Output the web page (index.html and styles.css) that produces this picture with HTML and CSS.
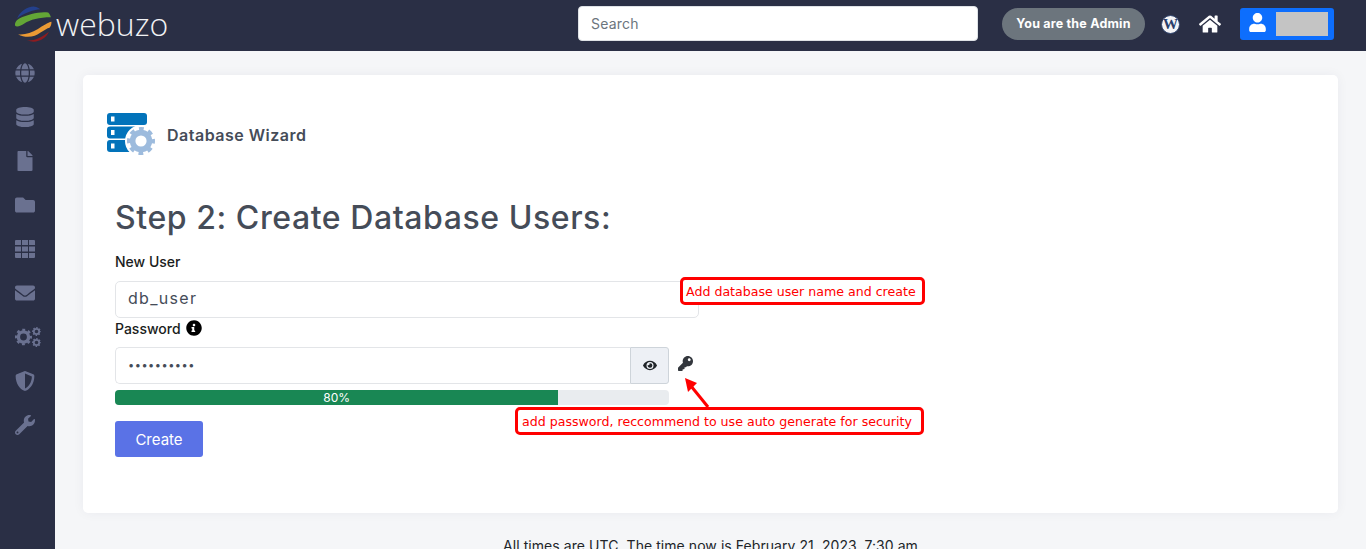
FILE: index.html
```html
<!DOCTYPE html>
<html lang="en">
<head>
<meta charset="utf-8">
<title>Database Wizard</title>
<link rel="stylesheet" href="styles.css">
</head>
<body>
<svg class="defs" aria-hidden="true">
  <symbol id="gear" viewBox="0 0 40 40">
    <circle cx="20" cy="20" r="17" fill="none" stroke="currentColor" stroke-width="6" stroke-dasharray="6.700 6.650" stroke-dashoffset="3.350"/>
    <circle cx="20" cy="20" r="12" fill="none" stroke="currentColor" stroke-width="8"/>
  </symbol>
</svg>
<header class="topbar">
  <a class="brand">
    <svg class="brand-mark" viewBox="40 15 120 115">
      <path d="M52 56C60 35 85 18 105 20c7 1 13 4 17 8-22 2-52 12-70 28z" fill="#24408c"/>
      <path d="M46 78C44 68 50 60 60 55c25-11 60-21 86-17 4 4 7 9 8 14-34 0-64 8-79 18-10 6-23 14-29 8z" fill="#63a636"/>
      <path d="M55 104c20 2 40-4 60-16 15-10 30-20 41-22 0 8-2 14-6 18-15 4-25 16-45 24-15 5-35 4-50-4z" fill="#eb9a34"/>
      <path d="M82 122c18 2 43-6 66-26-6 16-26 30-46 30-7 0-14-1-20-4z" fill="#8e1c20"/>
    </svg>
    <span class="brand-name">webuzo</span>
  </a>
  <input class="search" type="text" placeholder="Search">
  <div class="top-actions">
    <span class="admin-pill">You are the Admin</span>
    <span class="wp-badge"><span class="wp-letter">W</span></span>
    <svg class="home-icon" viewBox="0 0 576 512"><path fill="currentColor" d="M280.37 148.26L96 300.11V464a16 16 0 0 0 16 16l112.06-.29a16 16 0 0 0 15.92-16V368a16 16 0 0 1 16-16h64a16 16 0 0 1 16 16v95.64a16 16 0 0 0 16 16.05L464 480a16 16 0 0 0 16-16V300L295.67 148.26a12.19 12.19 0 0 0-15.3 0zM571.6 251.47L488 182.56V44.05a12 12 0 0 0-12-12h-56a12 12 0 0 0-12 12v72.61L318.47 43a48 48 0 0 0-61 0L4.34 251.47a12 12 0 0 0-1.6 16.9l25.5 31A12 12 0 0 0 45.15 301l235.22-193.74a12.19 12.19 0 0 1 15.3 0L530.9 301a12 12 0 0 0 16.9-1.6l25.5-31a12 12 0 0 0-1.7-16.93z"/></svg>
    <div class="user-btn">
      <svg class="user-icon" viewBox="0 0 448 512"><path fill="currentColor" d="M224 256c70.7 0 128-57.3 128-128S294.7 0 224 0 96 57.3 96 128s57.3 128 128 128zm89.6 32h-16.7c-22.2 10.2-46.9 16-72.9 16s-50.6-5.8-72.9-16h-16.7C60.2 288 0 348.2 0 422.4V464c0 26.5 21.5 48 48 48h352c26.5 0 48-21.5 48-48v-41.6c0-74.2-60.2-134.4-134.4-134.4z"/></svg>
      <span class="user-mask"></span>
    </div>
  </div>
</header>
<div class="layout">
  <nav class="sidebar">
    <svg class="side-icon" viewBox="0 0 496 512"><path fill="currentColor" d="M336.5 160C322 70.7 287.8 8 248 8s-74 62.7-88.5 152h177zM152 256c0 22.2 1.2 43.5 3.3 64h185.3c2.1-20.5 3.3-41.8 3.3-64s-1.2-43.5-3.3-64H155.3c-2.1 20.5-3.3 41.8-3.3 64zm324.7-96c-28.6-67.9-86.5-120.4-158-141.6 24.4 33.8 41.2 84.7 50 141.6h108zM177.2 18.4C105.8 39.6 47.8 92.1 19.3 160h108c8.7-56.9 25.5-107.8 49.9-141.6zM487.4 192H372.7c2.1 21 3.3 42.5 3.3 64s-1.2 43-3.3 64h114.6c5.500-20.5 8.6-41.8 8.6-64s-3.1-43.5-8.5-64zM120 256c0-21.5 1.2-43 3.3-64H8.6C3.2 212.5 0 233.8 0 256s3.2 43.5 8.6 64h114.6c-2-21-3.2-42.5-3.2-64zm39.5 96c14.5 89.3 48.7 152 88.5 152s74-62.7 88.5-152h-177zm159.3 141.6c71.4-21.2 129.4-73.7 158-141.6h-108c-8.8 56.9-25.6 107.8-50 141.6zM19.3 352c28.6 67.9 86.5 120.4 158 141.6-24.4-33.8-41.2-84.7-50-141.6h-108z"/></svg>
    <svg class="side-icon" viewBox="0 0 448 512"><path fill="currentColor" d="M448 73.143v45.714C448 159.143 347.667 192 224 192S0 159.143 0 118.857V73.143C0 32.857 100.333 0 224 0s224 32.857 224 73.143zM448 176v102.857C448 319.143 347.667 352 224 352S0 319.143 0 278.857V176c48.125 33.143 136.208 48.572 224 48.572S399.874 209.143 448 176zm0 160v102.857C448 479.143 347.667 512 224 512S0 479.143 0 438.857V336c48.125 33.143 136.208 48.572 224 48.572S399.874 369.143 448 336z"/></svg>
    <svg class="side-icon" viewBox="0 0 384 512"><path fill="currentColor" d="M224 136V0H24C10.700 0 0 10.700 0 24v464c0 13.300 10.700 24 24 24h336c13.300 0 24-10.700 24-24V160H248c-13.200 0-24-10.800-24-24zm160-14.100v6.100H256V0h6.100c6.400 0 12.500 2.500 17 7l97.900 98c4.500 4.500 7 10.600 7 16.900z"/></svg>
    <svg class="side-icon" viewBox="0 0 512 512"><path fill="currentColor" d="M464 128H272l-64-64H48C21.490 64 0 85.490 0 112v288c0 26.510 21.490 48 48 48h416c26.510 0 48-21.490 48-48V176c0-26.510-21.490-48-48-48z"/></svg>
    <svg class="side-icon" viewBox="0 0 20 18"><path fill="currentColor" d="M0 1a1 1 0 0 1 1-1h5v5H0zM7 0h6v5H7zM14 0h5a1 1 0 0 1 1 1v4h-6zM0 6.500h6v5H0zM7 6.500h6v5H7zM14 6.500h6v5h-6zM0 13h6v5H1a1 1 0 0 1-1-1zM7 13h6v5H7zM14 13h6v4a1 1 0 0 1-1 1h-5z"/></svg>
    <svg class="side-icon" viewBox="0 0 512 512"><path fill="currentColor" d="M502.3 190.800c3.900-3.100 9.700-.2 9.700 4.700V400c0 26.500-21.500 48-48 48H48c-26.500 0-48-21.500-48-48V195.600c0-5 5.700-7.800 9.700-4.700 22.400 17.400 52.100 39.500 154.100 113.600 21.100 15.400 56.700 47.800 92.200 47.600 35.700.3 72-32.800 92.300-47.600 102-74.100 131.600-96.300 154-113.700zM256 320c23.200.4 56.600-29.200 73.400-41.400 132.700-96.300 142.800-104.700 173.400-128.700 5.800-4.500 9.200-11.500 9.200-18.900v-19c0-26.500-21.500-48-48-48H48C21.500 64 0 85.500 0 112v19c0 7.400 3.400 14.300 9.200 18.900 30.600 23.900 40.700 32.400 173.400 128.700 16.800 12.200 50.200 41.800 73.400 41.400z"/></svg>
    <svg class="side-icon side-cogs" viewBox="0 0 26 20">
      <use href="#gear" x="0" y="1.500" width="17" height="17"/>
      <use href="#gear" x="17" y="0" width="9" height="9"/>
      <use href="#gear" x="17" y="11" width="9" height="9"/>
    </svg>
    <svg class="side-icon" viewBox="0 0 512 512"><path fill="currentColor" d="M466.500 83.700l-192-80a48.150 48.150 0 0 0-36.900 0l-192 80C27.700 91.100 16 108.600 16 128c0 198.500 114.500 335.700 221.500 380.300 11.800 4.900 25.100 4.900 36.900 0C360.100 472.600 496 349.300 496 128c0-19.400-11.700-36.900-29.500-44.300zM256.100 446.300l-.1-381 175.900 73.300c-3.300 151.400-82.100 261.100-175.800 307.700z"/></svg>
    <svg class="side-icon" viewBox="0 0 512 512"><path fill="currentColor" d="M507.730 109.100c-2.240-9.030-13.540-12.090-20.120-5.510l-74.360 74.360-67.880-11.310-11.310-67.880 74.360-74.360c6.620-6.620 3.430-17.900-5.660-20.160-47.380-11.740-99.550.91-136.580 37.930-39.640 39.640-50.550 97.100-34.050 147.200L18.740 402.760c-24.990 24.990-24.990 65.510 0 90.500 24.990 24.990 65.510 24.990 90.500 0l213.210-213.210c50.120 16.710 107.470 5.680 147.370-34.220 37.070-37.070 49.700-89.320 37.910-136.730zM64 472c-13.250 0-24-10.750-24-24 0-13.260 10.750-24 24-24s24 10.740 24 24c0 13.250-10.750 24-24 24z"/></svg>
  </nav>
  <main class="content">
    <section class="card">
      <div class="wizard-head">
        <svg class="wizard-icon" viewBox="0 0 48 42">
          <rect x="0" y="0" width="40" height="12" rx="3" fill="#0273ba"/>
          <rect x="0" y="13.500" width="40" height="12" rx="3" fill="#0273ba"/>
          <rect x="0" y="27" width="40" height="12" rx="3" fill="#0273ba"/>
          <rect x="4" y="3.500" width="3.500" height="5" fill="#fff"/>
          <rect x="4" y="17" width="3.500" height="5" fill="#fff"/>
          <rect x="4" y="30.500" width="3.500" height="5" fill="#fff"/>
          <circle cx="34" cy="28" r="16" fill="#fff"/>
          <use class="wizard-gear" href="#gear" x="20" y="14" width="28" height="28"/>
        </svg>
        <h2 class="wizard-title">Database Wizard</h2>
      </div>
      <div class="form">
        <h1 class="step-title">Step 2: Create Database Users:</h1>
        <label class="field-label first">New User</label>
        <input class="field user-field" type="text" value="db_user">
        <label class="field-label second">Password
          <svg class="info-icon" viewBox="0 0 512 512"><path fill="currentColor" d="M256 8C119.043 8 8 119.083 8 256c0 136.997 111.043 248 248 248s248-111.003 248-248C504 119.083 392.957 8 256 8zm0 110c23.196 0 42 18.804 42 42s-18.804 42-42 42-42-18.804-42-42 18.804-42 42-42zm56 254c0 6.627-5.373 12-12 12h-112c-6.627 0-12-5.373-12-12v-24c0-6.627 5.373-12 12-12h12v-64h-12c-6.627 0-12-5.373-12-12v-24c0-6.627 5.373-12 12-12h64c6.627 0 12 5.373 12 12v100h12c6.627 0 12 5.373 12 12v24z"/></svg>
        </label>
        <div class="password-row">
          <div class="input-group">
            <input class="field pass-field" type="password" value="abcdefghij">
            <span class="eye-addon"><svg class="eye-icon" viewBox="0 0 576 512"><path fill="currentColor" d="M572.520 241.400C518.290 135.590 410.930 64 288 64S57.680 135.640 3.480 241.410a32.350 32.350 0 0 0 0 29.190C57.710 376.410 165.070 448 288 448s230.320-71.640 284.520-177.410a32.350 32.350 0 0 0 0-29.190zM288 400a144 144 0 1 1 144-144 143.930 143.930 0 0 1-144 144zm0-240a95.310 95.310 0 0 0-25.310 3.790 47.850 47.850 0 0 1-66.900 66.900A95.780 95.780 0 1 0 288 160z"/></svg></span>
          </div>
          <svg class="key-icon" viewBox="0 0 512 512"><path fill="currentColor" d="M512 176.001C512 273.203 433.202 352 336 352c-11.220 0-22.190-1.062-32.827-3.069l-24.012 27.014A23.999 23.999 0 0 1 261.223 384H224v40c0 13.255-10.745 24-24 24h-40v40c0 13.255-10.745 24-24 24H24c-13.255 0-24-10.745-24-24v-78.059c0-6.365 2.529-12.470 7.029-16.971l161.802-161.802C163.108 213.814 160 195.271 160 176 160 78.798 238.797.001 335.999 0 433.488-.001 512 78.511 512 176.001zM336 128c0 26.510 21.490 48 48 48s48-21.490 48-48-21.490-48-48-48-48 21.490-48 48z"/></svg>
        </div>
        <div class="progress"><div class="progress-fill" style="width:80%">80%</div></div>
        <button class="create-btn" type="button">Create</button>
      </div>
      <div class="note note-user">Add database user name and create</div>
      <div class="note note-pass">add password, reccommend to use auto generate for security</div>
      <svg class="note-arrow" viewBox="0 0 30 30"><path d="M24 29L7 8" stroke="#f00" stroke-width="3" fill="none"/><path d="M1 0l12 5L4 14z" fill="#f00"/></svg>
    </section>
    <footer class="foot">All times are UTC. The time now is February 21, 2023, 7:30 am</footer>
  </main>
</div>
</body>
</html>
```
FILE: styles.css
```css
* { box-sizing: border-box; }
html, body { margin: 0; height: 549px; overflow: hidden; }
body { font-family: Inter, "Liberation Sans", sans-serif; background: #f5f6f8; color: #212529; }
.defs { display: none; }

.topbar { display: flex; align-items: center; height: 51px; padding-bottom: 3px; background: #2a2f45; }
.brand { display: flex; align-items: center; gap: 3px; width: 578px; padding-left: 13px; }
.brand-mark { width: 40px; height: 38px; flex: none; }
.brand-name { font-family: "Open Sans", sans-serif; font-weight: 300; font-size: 32px; color: #f1f2f4; line-height: 38px; }
.search { width: 400px; height: 35px; margin-top: -1px; padding: 0 12px; border: 1px solid #dee2e6; border-radius: 4px; background: #fff; font: 400 14px Inter, sans-serif; letter-spacing: .2px; }
.search::placeholder { color: #6c757d; opacity: 1; }
.top-actions { display: flex; align-items: center; margin-left: 24px; }
.admin-pill { width: 143px; height: 32px; border-radius: 16px; background: #6c757d; color: #fff; font-size: 12.500px; font-weight: 700; line-height: 32px; text-align: center; letter-spacing: .2px; }
.wp-badge { display: flex; align-items: center; justify-content: center; width: 19px; height: 19px; margin-left: 16px; border-radius: 50%; background: #f4f4f6; border: 1.500px solid #32466f; overflow: hidden; }
.wp-letter { font-family: "Liberation Serif", serif; font-weight: 700; font-size: 15px; line-height: 1; color: #2a3f6c; }
.home-icon { width: 22px; height: 20px; margin-left: 19px; color: #fff; }
.user-btn { display: flex; align-items: center; width: 94px; height: 32px; margin-left: 19px; padding-left: 9px; gap: 10px; border-radius: 3px; background: #0d6efd; }
.user-icon { width: 17px; height: 19px; margin-top: -3px; color: #fff; }
.user-mask { width: 52px; height: 24px; background: #c4c4c4; }

.layout { display: flex; height: 498px; }
.sidebar { display: flex; flex-direction: column; align-items: center; gap: 24px; flex: none; width: 55px; padding: 12px 5px 0 0; background: #2a2f45; color: #6a7190; }
.side-icon { width: 20px; height: 20px; flex: none; }
.side-cogs { width: 26px; margin-left: 5px; }
.content { flex: 1; padding: 24px 28px 0; }

.card { position: relative; height: 438px; padding: 38px 24px 0; border-radius: 5px; background: #fff; box-shadow: 0 0 12px rgba(30, 40, 70, .05); }
.wizard-head { display: flex; align-items: center; gap: 12px; height: 42px; }
.wizard-icon { width: 48px; height: 42px; flex: none; }
.wizard-gear { color: #9dbbdd; }
.wizard-title { margin: 2px 0 0; font-size: 16px; font-weight: 600; color: #454c58; letter-spacing: .5px; }
.form { padding: 0 8px; }
.step-title { margin: 39px 0 0; font-size: 32px; line-height: 48px; font-weight: 500; color: #454c58; letter-spacing: .57px; }
.field-label { display: flex; align-items: center; gap: 5px; height: 21px; font-size: 14px; font-weight: 500; color: #1a1d20; }
.first { margin-top: 9px; }
.second { height: 20px; }
.field { display: block; height: 37px; border: 1px solid #e3e5e8; border-radius: 5px; background: #fff; color: #454c58; padding: 0 12px; outline: none; }
.user-field { width: 584px; margin-top: 9px; padding-bottom: 3px; font: 400 16px Inter, sans-serif; letter-spacing: 1.300px; }
.info-icon { width: 16px; height: 16px; color: #000; }
.password-row { display: flex; align-items: center; margin-top: 9px; }
.input-group { display: flex; width: 554px; }
.pass-field { flex: 1; min-width: 0; padding-bottom: 2px; border-radius: 5px 0 0 5px; border-right: 0; font: 400 11px Inter, sans-serif; letter-spacing: .5px; }
.eye-addon { display: flex; align-items: center; justify-content: center; width: 39px; height: 37px; border: 1px solid #ced4da; border-radius: 0 3px 3px 0; background: #edf0f5; }
.eye-icon { width: 14px; height: 13px; color: #212529; }
.key-icon { width: 15px; height: 15px; margin: -4px 0 0 9px; color: #33373d; }
.progress { width: 554px; height: 15px; margin-top: 6px; border-radius: 4px; background: #e9ecef; overflow: hidden; }
.progress-fill { height: 15px; background: #198754; color: #fff; font-size: 12px; line-height: 15px; text-align: center; }
.create-btn { display: block; width: 88px; height: 36px; margin-top: 16px; padding: 0; border: 0; border-radius: 3px; background: #5a72e6; color: #fff; font: 400 15px Inter, sans-serif; }

.note { position: absolute; height: 28px; border: 3px solid #f00; border-radius: 5px; background: #fff; color: #f00; font-family: "DejaVu Sans", sans-serif; font-size: 12.600px; line-height: 24px; white-space: nowrap; }
.note-user { left: 597px; top: 202px; width: 245px; padding-left: 3px; }
.note-pass { left: 432px; top: 332px; width: 409px; padding-left: 4px; }
.note-arrow { position: absolute; left: 601px; top: 303px; width: 30px; height: 30px; }

.foot { margin-top: 24px; text-align: center; font-size: 14px; line-height: 18px; letter-spacing: .06px; color: #212529; }
```
